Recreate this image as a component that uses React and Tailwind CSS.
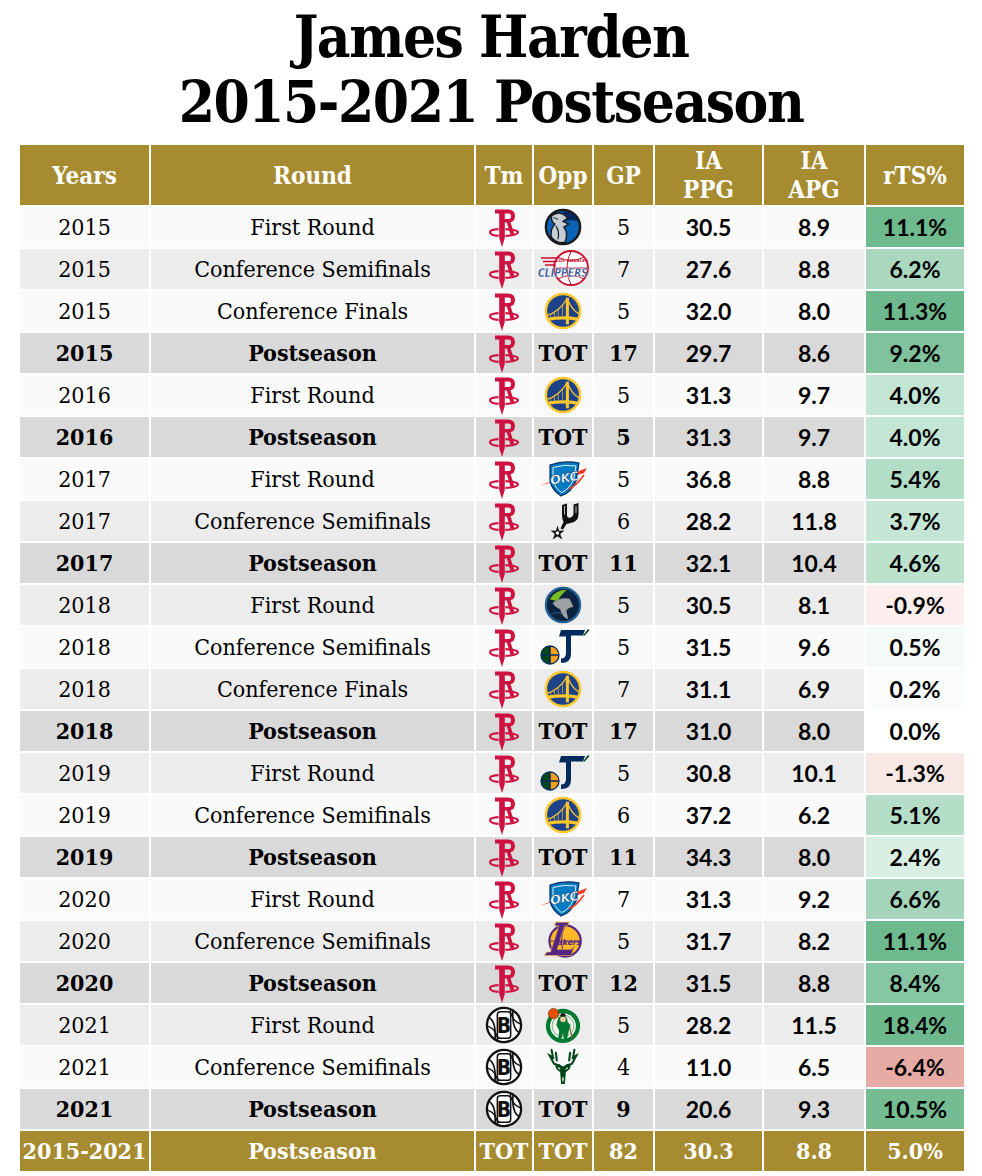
import React from "react";

const SERIF = "font-['DejaVu_Serif_Condensed','DejaVu_Serif',serif]";
const SANS = "font-['Lato','Liberation_Sans',sans-serif]";
const COLS = "grid grid-cols-[129px_323px_56px_58px_59px_107px_100px_98px] gap-[2px]";

function Rockets() {
  return (
    <svg viewBox="0 0 30 40" className="w-[32px] h-[40px] shrink-0">
      <path
        fill="#ce1141"
        fillRule="evenodd"
        d="M6 2.5 H19 Q26 2.5 26 9 Q26 14.2 21.5 15.2 L25.5 27.5 H21.5 L17.8 15.6 H15.8 V31 L13 40 L10.2 31 V6.5 H6 Z M15.8 6.5 V12 H19.5 Q22 12 22 9.2 Q22 6.5 19.5 6.5 Z"
      />
      <path d="M9.6 22.2 Q1 22.6 1 25.4 Q1.5 28.4 9.6 28.8" fill="none" stroke="#ce1141" strokeWidth="2.2" />
      <path d="M16.4 22.2 Q29 22.6 29 25.4 Q28.5 28.4 16.4 28.8" fill="none" stroke="#ce1141" strokeWidth="2.2" />
    </svg>
  );
}

function Nets() {
  return (
    <svg viewBox="0 0 40 40" className="w-[38px] h-[38px] shrink-0">
      <circle cx="20" cy="20" r="18" fill="#fff" stroke="#111" strokeWidth="2.4" />
      <path d="M4 12 Q12 16 10.5 36" fill="none" stroke="#111" strokeWidth="1.8" />
      <path d="M36 28 Q28 24 29.5 4" fill="none" stroke="#111" strokeWidth="1.8" />
      <path d="M2.5 21 Q13 25 13.5 37.5" fill="none" stroke="#111" strokeWidth="1.4" />
      <path d="M37.5 19 Q27 15 26.5 2.5" fill="none" stroke="#111" strokeWidth="1.4" />
      <rect x="13" y="6" width="14" height="28" rx="3" fill="#fff" stroke="#111" strokeWidth="1.6" />
      <text x="20" y="28.5" textAnchor="middle" fontFamily="DejaVu Sans Condensed, DejaVu Sans" fontWeight="700" fontSize="22" fill="#111">
        B
      </text>
    </svg>
  );
}

function Mavs() {
  return (
    <svg viewBox="0 0 40 40" className="w-[38px] h-[38px] shrink-0">
      <circle cx="20" cy="20" r="18" fill="#0b62b4" stroke="#1a1a1a" strokeWidth="2.6" />
      <path d="M20 3 Q31 4 36 14 Q28 12 22 14 Z" fill="#00285e" />
      <path
        d="M8 8 Q15 3 21 7 L25 10.5 L20 14 L26 17 L21 20 Q26 27 22 36 Q14 38 8 31 Q6 22 11.5 17 Q7 14 8 8 Z"
        fill="#c4ced4"
        stroke="#1a1a1a"
        strokeWidth="1.4"
      />
      <path d="M12.5 19 Q17 25 14.5 33" fill="none" stroke="#1a1a1a" strokeWidth="1.2" />
      <path d="M10 10 L15 12" stroke="#1a1a1a" strokeWidth="1" />
    </svg>
  );
}

function Clippers() {
  return (
    <svg viewBox="0 0 56 40" className="w-[56px] h-[40px] shrink-0">
      <circle cx="36" cy="19" r="17" fill="#fff" stroke="#c8102e" strokeWidth="1.8" />
      <path d="M36 2 Q28 19 36 36 M19 19 H53 M23 8 Q36 15 49 8 M23 30 Q36 23 49 30" fill="none" stroke="#c8102e" strokeWidth="1" />
      <path d="M6 9 H24 M8 12.5 H22 M10 16 H21" stroke="#c8102e" strokeWidth="1.3" />
      <text x="37" y="12.5" textAnchor="middle" fontFamily="DejaVu Sans" fontWeight="700" fontSize="4.2" fill="#c8102e">
        LOS ANGELES
      </text>
      <text
        x="28"
        y="28"
        textAnchor="middle"
        fontFamily="DejaVu Sans Condensed, DejaVu Sans"
        fontStyle="italic"
        fontWeight="700"
        fontSize="12"
        fill="#1d428a"
        stroke="#fff"
        strokeWidth="0.4"
        textLength="50"
        lengthAdjust="spacingAndGlyphs"
      >
        CLIPPERS
      </text>
    </svg>
  );
}

function Warriors() {
  return (
    <svg viewBox="0 0 40 40" className="w-[38px] h-[38px] shrink-0">
      <circle cx="20" cy="20" r="18" fill="#1d428a" stroke="#ffc72c" strokeWidth="2.6" />
      <path d="M3.5 27 Q20 24 36.5 27 L36 30.5 Q20 27.5 4 30.5 Z" fill="#ffc72c" />
      <rect x="23" y="6" width="3.2" height="28" fill="#ffc72c" />
      <path d="M24.5 7 Q15 22 3 24.5 M24.5 7 Q30 20 37 23" fill="none" stroke="#ffc72c" strokeWidth="1.3" />
      <path d="M7 26.3 V23.8 M11 25.6 V21.8 M15 25 V19 M19.5 24.6 V14" stroke="#ffc72c" strokeWidth="0.7" />
    </svg>
  );
}

function Thunder() {
  return (
    <svg viewBox="0 0 50 40" className="w-[52px] h-[40px] shrink-0">
      <path d="M1 27 L49 9 L46 14 Z" fill="#ef3b24" />
      <path d="M12 6 Q26 1 41 4 L38 22 Q33 34 23 37 Q14 31 12 22 Z" fill="#007ac1" stroke="#002d62" strokeWidth="1.2" />
      <path d="M15 8.5 Q26 5 38 7 L35.5 21 Q31 30.5 23.5 33.5 Q16.5 28.5 15 21 Z" fill="none" stroke="#fff" strokeWidth="0.9" />
      <text x="26.5" y="23.5" textAnchor="middle" fontFamily="DejaVu Sans" fontStyle="italic" fontWeight="700" fontSize="12.5" fill="#fff" stroke="#002d62" strokeWidth="0.4" transform="rotate(-10 26 20)">
        OKC
      </text>
      <path d="M31 30 Q38 27 46 16" fill="none" stroke="#ef3b24" strokeWidth="1.6" />
    </svg>
  );
}

function Spurs() {
  return (
    <svg viewBox="0 0 40 40" className="w-[40px] h-[40px] shrink-0">
      <path
        d="M19 4 L24 2.5 L24 14 Q24 17.5 27.5 16.5 Q30.5 15.5 30.5 12 L30.5 3.5 L35.5 2 L35.5 13 Q35.5 21 27.5 22 L23.5 23 L20 28.5 L17.5 27.5 L20.5 21 Q19 18.5 19 14 Z"
        fill="#111"
      />
      <path d="M21.5 5 L21.5 13.5 M33 5 L33 12" stroke="#c4ced4" strokeWidth="0.9" />
      <g transform="translate(14.5 32)">
        <path d="M0 -7.5 L1.6 -2.2 L7 -2.6 L2.7 1 L4.8 6.5 L0 3.2 L-4.8 6.5 L-2.7 1 L-7 -2.6 L-1.6 -2.2 Z" fill="#111" />
        <circle r="1.7" fill="#fff" />
      </g>
    </svg>
  );
}

function Wolves() {
  return (
    <svg viewBox="0 0 40 40" className="w-[38px] h-[38px] shrink-0">
      <circle cx="20" cy="20" r="18" fill="#0c2340" stroke="#236192" strokeWidth="2.4" />
      <path d="M6 14 Q12 4 24 4 Q18 9 14 16 Z" fill="#78be20" />
      <path d="M9 18 Q18 11 27 13.5 L31 22 Q25.5 22 23.5 26 L25.5 35 Q19 33 17 24.5 Q11.5 22.5 9 18 Z" fill="#9ea2a2" />
      <path d="M7 30 Q14 26 20 30" fill="none" stroke="#236192" strokeWidth="1" />
    </svg>
  );
}

function Jazz() {
  return (
    <svg viewBox="0 0 54 40" className="w-[54px] h-[40px] shrink-0">
      <path d="M25 3 H49 L47 8.5 H35 V27 Q35 36 25 36 L25 31.5 Q30 31.5 30 26 V9.5 H23 Z" fill="#002b5c" />
      <path d="M47 8.5 L52 2 L53.5 3 L48.8 8.5 Z" fill="#00471b" />
      <circle cx="14" cy="28" r="9" fill="#f9a01b" />
      <path d="M5 28 A9 9 0 0 1 14 19 L14 37 A9 9 0 0 1 5 28 Z" fill="#00471b" />
      <path d="M14 19 V37 M5 28 H23" stroke="#002b5c" strokeWidth="1.5" />
      <circle cx="14" cy="28" r="9" fill="none" stroke="#002b5c" strokeWidth="1.3" />
    </svg>
  );
}

function Lakers() {
  return (
    <svg viewBox="0 0 46 40" className="w-[48px] h-[42px] shrink-0">
      <circle cx="25" cy="20" r="15" fill="#fdb927" stroke="#552583" strokeWidth="2" />
      <path d="M25 5 Q18 20 25 35 M10 20 H40" fill="none" stroke="#552583" strokeWidth="1" />
      <path d="M16 2 H29 L27 5.5 H24.5 L17.5 28 H31 L34 24.5 L31 34 H5 L7.5 30.5 H11 L19 5.5 H15 Z" fill="#552583" stroke="#fdb927" strokeWidth="0.6" />
      <text x="29" y="23.5" textAnchor="middle" fontFamily="DejaVu Sans" fontStyle="italic" fontWeight="700" fontSize="7.5" fill="#552583">
        akers
      </text>
    </svg>
  );
}

function Celtics() {
  return (
    <svg viewBox="0 0 40 40" className="w-[38px] h-[40px] shrink-0">
      <circle cx="20" cy="21" r="18" fill="#007a33" />
      <circle cx="20" cy="21" r="13.5" fill="#fff" />
      <circle cx="20" cy="21" r="11.5" fill="#f3f0e6" stroke="#007a33" strokeWidth="0.6" />
      <path d="M15 12 Q20 9 24 12 L25 17 L28 20 L26 27 L24 35 H21 L20 29 L18 35 H15 L16 26 L13 20 Z" fill="#007a33" />
      <circle cx="20" cy="14" r="3" fill="#f2c9a0" />
      <path d="M17 11 H23 L22 7.5 H18 Z" fill="#111" />
      <circle cx="10" cy="8" r="5.5" fill="#e35205" stroke="#6b2a00" strokeWidth="0.6" />
      <path d="M27 22 L30 35" stroke="#8b5a2b" strokeWidth="1.2" />
    </svg>
  );
}

function Bucks() {
  return (
    <svg viewBox="0 0 40 40" className="w-[38px] h-[40px] shrink-0">
      <path
        d="M8 2 L9.5 10 L6 8 L10.5 16.5 L16 18.5 M32 2 L30.5 10 L34 8 L29.5 16.5 L24 18.5 M12.5 5 L13.5 13 M27.5 5 L26.5 13"
        fill="none"
        stroke="#00471b"
        strokeWidth="2.2"
        strokeLinecap="round"
      />
      <path d="M11.5 18.5 L16 17 L20 19.5 L24 17 L28.5 18.5 L26.5 22.5 L23 25.5 L22 38 H18 L17 25.5 L13.5 22.5 Z" fill="#00471b" />
      <path d="M15 20.5 L17 22.5 M25 20.5 L23 22.5" stroke="#eee1c6" strokeWidth="1.2" />
      <path d="M19 31 H21 L20.5 35.5 H19.5 Z" fill="#eee1c6" />
    </svg>
  );
}

const LOGOS = {
  HOU: Rockets,
  BKN: Nets,
  DAL: Mavs,
  LAC: Clippers,
  GSW: Warriors,
  OKC: Thunder,
  SAS: Spurs,
  MIN: Wolves,
  UTA: Jazz,
  LAL: Lakers,
  BOS: Celtics,
  MIL: Bucks,
};

const rows = [
  ["2015", "First Round", "HOU", "DAL", "5", "30.5", "8.9", "11.1%", "bg-[#6fb98f]"],
  ["2015", "Conference Semifinals", "HOU", "LAC", "7", "27.6", "8.8", "6.2%", "bg-[#a9d8bf]"],
  ["2015", "Conference Finals", "HOU", "GSW", "5", "32.0", "8.0", "11.3%", "bg-[#6db88d]"],
  ["2015", "Postseason", "HOU", "TOT", "17", "29.7", "8.6", "9.2%", "bg-[#7fc29c]"],
  ["2016", "First Round", "HOU", "GSW", "5", "31.3", "9.7", "4.0%", "bg-[#c3e5d3]"],
  ["2016", "Postseason", "HOU", "TOT", "5", "31.3", "9.7", "4.0%", "bg-[#c3e5d3]"],
  ["2017", "First Round", "HOU", "OKC", "5", "36.8", "8.8", "5.4%", "bg-[#b2ddc6]"],
  ["2017", "Conference Semifinals", "HOU", "SAS", "6", "28.2", "11.8", "3.7%", "bg-[#c6e6d5]"],
  ["2017", "Postseason", "HOU", "TOT", "11", "32.1", "10.4", "4.6%", "bg-[#bce2cd]"],
  ["2018", "First Round", "HOU", "MIN", "5", "30.5", "8.1", "-0.9%", "bg-[#fbeeec]"],
  ["2018", "Conference Semifinals", "HOU", "UTA", "5", "31.5", "9.6", "0.5%", "bg-[#f4faf7]"],
  ["2018", "Conference Finals", "HOU", "GSW", "7", "31.1", "6.9", "0.2%", "bg-[#fbfdfc]"],
  ["2018", "Postseason", "HOU", "TOT", "17", "31.0", "8.0", "0.0%", "bg-[#ffffff]"],
  ["2019", "First Round", "HOU", "UTA", "5", "30.8", "10.1", "-1.3%", "bg-[#f8e8e5]"],
  ["2019", "Conference Semifinals", "HOU", "GSW", "6", "37.2", "6.2", "5.1%", "bg-[#b5dec8]"],
  ["2019", "Postseason", "HOU", "TOT", "11", "34.3", "8.0", "2.4%", "bg-[#d9efe3]"],
  ["2020", "First Round", "HOU", "OKC", "7", "31.3", "9.2", "6.6%", "bg-[#a4d5bb]"],
  ["2020", "Conference Semifinals", "HOU", "LAL", "5", "31.7", "8.2", "11.1%", "bg-[#6fb98f]"],
  ["2020", "Postseason", "HOU", "TOT", "12", "31.5", "8.8", "8.4%", "bg-[#87c6a3]"],
  ["2021", "First Round", "BKN", "BOS", "5", "28.2", "11.5", "18.4%", "bg-[#6db88d]"],
  ["2021", "Conference Semifinals", "BKN", "MIL", "4", "11.0", "6.5", "-6.4%", "bg-[#e6aba4]"],
  ["2021", "Postseason", "BKN", "TOT", "9", "20.6", "9.3", "10.5%", "bg-[#75bc93]"],
];

function Row({ r, i }) {
  const [year, round, tm, opp, gp, ppg, apg, rts, rtsBg] = r;
  const ps = round === "Postseason";
  const bg = ps ? "bg-[#d9d9d9]" : i % 2 === 0 ? "bg-[#fafafa]" : "bg-[#ececec]";
  const serifW = ps ? "font-bold" : "font-normal";
  const cell = `${bg} flex items-center justify-center h-[40px] overflow-visible`;
  const Tm = LOGOS[tm];
  const Opp = LOGOS[opp];
  return (
    <div className={COLS}>
      <div className={`${cell} ${SERIF} ${serifW} text-[23px]`}>{year}</div>
      <div className={`${cell} ${SERIF} ${serifW} text-[23px] whitespace-nowrap`}>{round}</div>
      <div className={cell}>
        <Tm />
      </div>
      <div className={`${cell} ${SERIF} font-bold text-[23px]`}>{Opp ? <Opp /> : opp}</div>
      <div className={`${cell} ${SERIF} ${serifW} text-[23px]`}>{gp}</div>
      <div className={`${cell} ${SANS} font-bold text-[23px]`}>{ppg}</div>
      <div className={`${cell} ${SANS} font-bold text-[23px]`}>{apg}</div>
      <div className={`${rtsBg} flex items-center justify-center h-[40px] ${SANS} font-bold text-[23px]`}>{rts}</div>
    </div>
  );
}

export default function App() {
  const head = `bg-[#a68b30] text-white ${SERIF} font-bold text-[24px] leading-[29px] flex items-center justify-center text-center h-[60px]`;
  const foot = `bg-[#a68b30] text-white ${SERIF} font-bold text-[23px] flex items-center justify-center h-[40px] whitespace-nowrap`;
  return (
    <div className="w-[982px] bg-white text-black">
      <h1 className={`${SERIF} font-bold text-[58px] leading-[65px] text-center pt-[5px] tracking-[-1.5px]`}>
        James Harden
        <br />
        2015-2021 Postseason
      </h1>
      <div className="ml-[20px] mt-[10px] w-[944px] flex flex-col gap-[2px]">
        <div className={COLS}>
          <div className={head}>Years</div>
          <div className={head}>Round</div>
          <div className={head}>Tm</div>
          <div className={head}>Opp</div>
          <div className={head}>GP</div>
          <div className={head}>
            IA
            <br />
            PPG
          </div>
          <div className={head}>
            IA
            <br />
            APG
          </div>
          <div className={head}>rTS%</div>
        </div>
        {rows.map((r, i) => (
          <Row key={i} r={r} i={i} />
        ))}
        <div className={COLS}>
          <div className={foot}>2015-2021</div>
          <div className={foot}>Postseason</div>
          <div className={foot}>TOT</div>
          <div className={foot}>TOT</div>
          <div className={foot}>82</div>
          <div className={foot}>30.3</div>
          <div className={foot}>8.8</div>
          <div className={foot}>5.0%</div>
        </div>
      </div>
    </div>
  );
}
